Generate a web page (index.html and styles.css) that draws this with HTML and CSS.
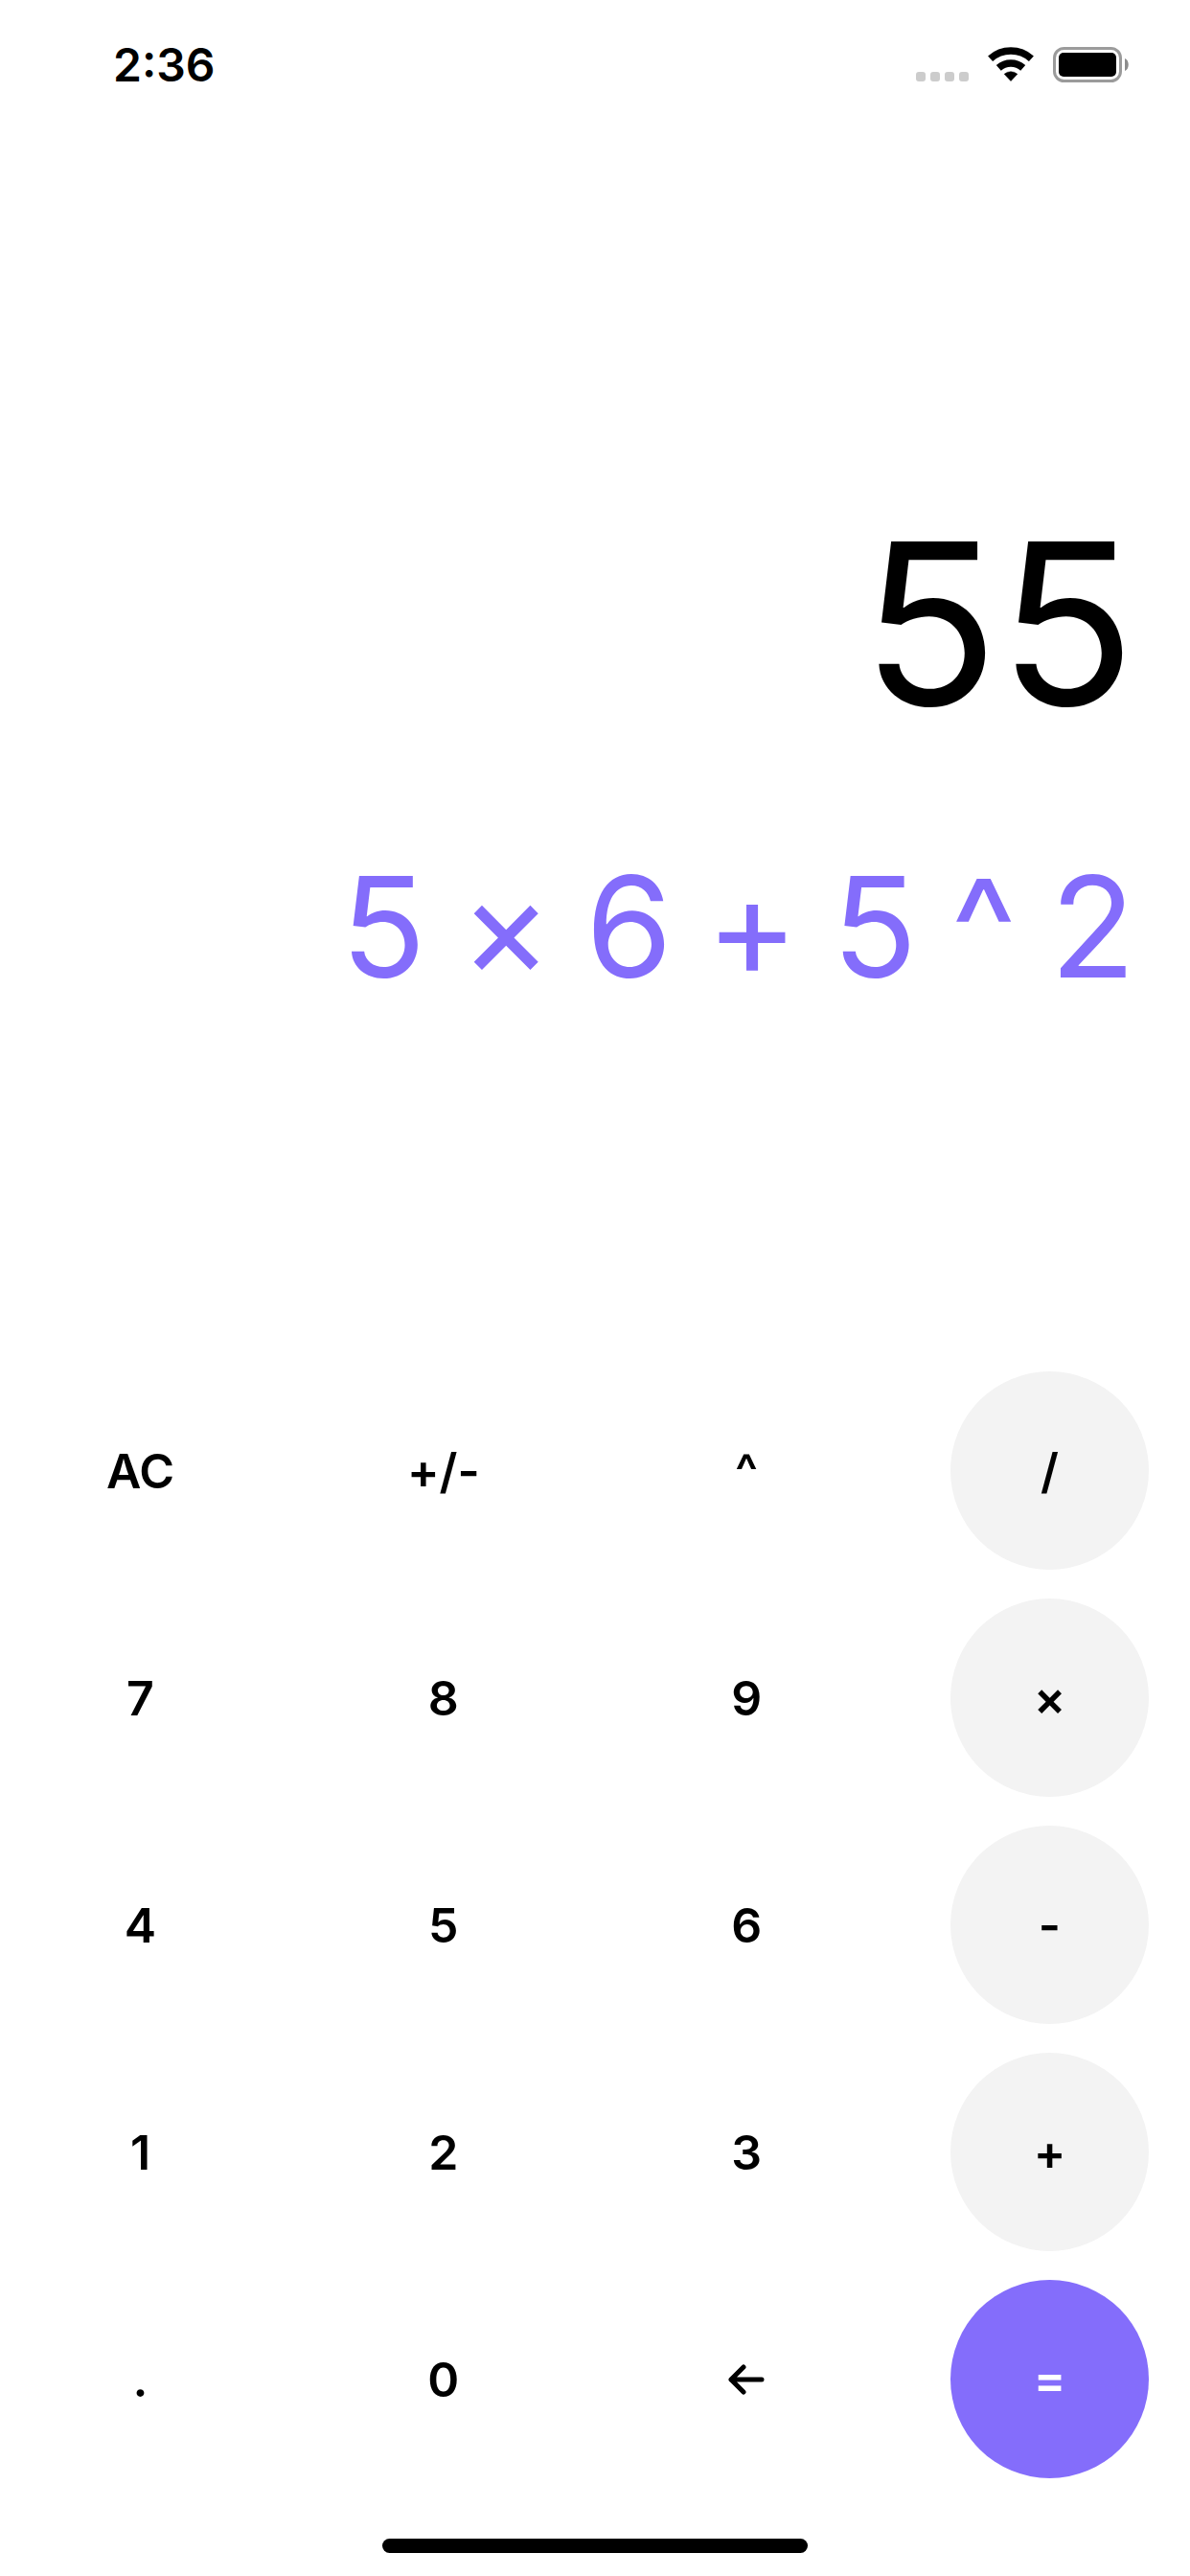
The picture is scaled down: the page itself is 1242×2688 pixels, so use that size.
FILE: index.html
```html
<!DOCTYPE html>
<html lang="en">
<head>
<meta charset="utf-8">
<meta name="viewport" content="width=device-width, initial-scale=1">
<title>Calculator</title>
<link rel="stylesheet" href="styles.css">
</head>
<body>
<header class="status">
  <time class="clock">2:36</time>
  <div class="indicators">
    <svg width="55" height="11" viewBox="0 0 55 11" fill="#ccc" aria-hidden="true"><rect width="10" height="10" rx="3"/><rect x="15" width="10" height="10" rx="3"/><rect x="30" width="10" height="10" rx="3"/><rect x="45" width="10" height="10" rx="3"/></svg>
    <svg width="48" height="37" viewBox="0 0 48 37" aria-hidden="true"><g fill="none" stroke="#000" stroke-width="7.500"><path d="M2.600 12.200A32 32 0 0 1 45.400 12.200"/><path d="M11.300 21.900A19 19 0 0 1 36.700 21.900"/></g><path d="M17.200 28.300A10.500 10.500 0 0 1 30.800 28.300L24 35.500z" stroke="#000" stroke-width=".6" stroke-linejoin="round"/></svg>
    <svg width="80" height="37" viewBox="0 0 80 37" aria-hidden="true"><rect x="1.500" y="1.500" width="69" height="34" rx="10" fill="none" stroke="#9b9b9b" stroke-width="3"/><rect x="6" y="6" width="60" height="25" rx="5"/><path d="M75 12v13c5-2 5-11 0-13z" fill="#8c8c8c"/></svg>
  </div>
</header>
<main class="calculator">
  <section class="display">
    <output class="result">55</output>
    <p class="expression"><span>5</span> <span>×</span> <span>6</span> <span>+</span> <span>5</span> <span>^</span> <span>2</span></p>
  </section>
  <section class="keypad" aria-label="Keypad">
    <button class="key">AC</button><button class="key">+/-</button><button class="key">^</button><button class="key operator">/</button>
    <button class="key">7</button><button class="key">8</button><button class="key">9</button><button class="key operator">×</button>
    <button class="key">4</button><button class="key">5</button><button class="key">6</button><button class="key operator">-</button>
    <button class="key">1</button><button class="key">2</button><button class="key">3</button><button class="key operator">+</button>
    <button class="key">.</button><button class="key">0</button><button class="key" aria-label="Delete"><svg class="arrow" width="38" height="32" viewBox="0 0 38 32" fill="none" stroke="#000" stroke-width="5" stroke-linecap="round" stroke-linejoin="round" aria-hidden="true"><path d="M35 16H3M16 3 3 16l13 13"/></svg></button><button class="key equals">=</button>
  </section>
</main>
<footer class="home"><div class="home-bar"></div></footer>
</body>
</html>
```
FILE: styles.css
```css
* { box-sizing: border-box; }
body {
  margin: 0;
  min-height: 100vh;
  display: flex;
  flex-direction: column;
  background: #fff;
  color: #000;
  font-family: Inter, "Liberation Sans", sans-serif;
}
.status {
  display: flex;
  justify-content: space-between;
  align-items: center;
  height: 135px;
  padding: 0 63px 0 118px;
}
.clock { font-size: 48px; font-weight: 600; }
.indicators { display: flex; align-items: flex-end; gap: 20px; }
.calculator {
  flex: 1;
  display: flex;
  flex-direction: column;
  justify-content: space-between;
}
.display {
  display: flex;
  flex-direction: column;
  align-items: flex-end;
  gap: 86px;
  padding: 376px 57px 0;
}
.result { font-size: 235px; line-height: 280px; }
.expression {
  display: flex;
  gap: 35px;
  margin: 0;
  color: #846dfb;
  font-size: 146px;
  line-height: 180px;
}
.keypad {
  display: grid;
  grid-template-columns: repeat(4, 207px);
  justify-content: space-between;
  row-gap: 30px;
  padding: 0 43px;
}
.key {
  height: 207px;
  padding: 0;
  border: 0;
  border-radius: 50%;
  background: transparent;
  color: #000;
  font: 600 50px Inter, "Liberation Sans", sans-serif;
}
.arrow { display: block; margin: 0 auto; }
.operator { background: #f3f3f3; }
.equals { background: #846dfb; color: #fff; }
.home { display: flex; justify-content: center; padding: 63px 0 24px; }
.home-bar { width: 444px; height: 15px; border-radius: 8px; background: #000; }
```
